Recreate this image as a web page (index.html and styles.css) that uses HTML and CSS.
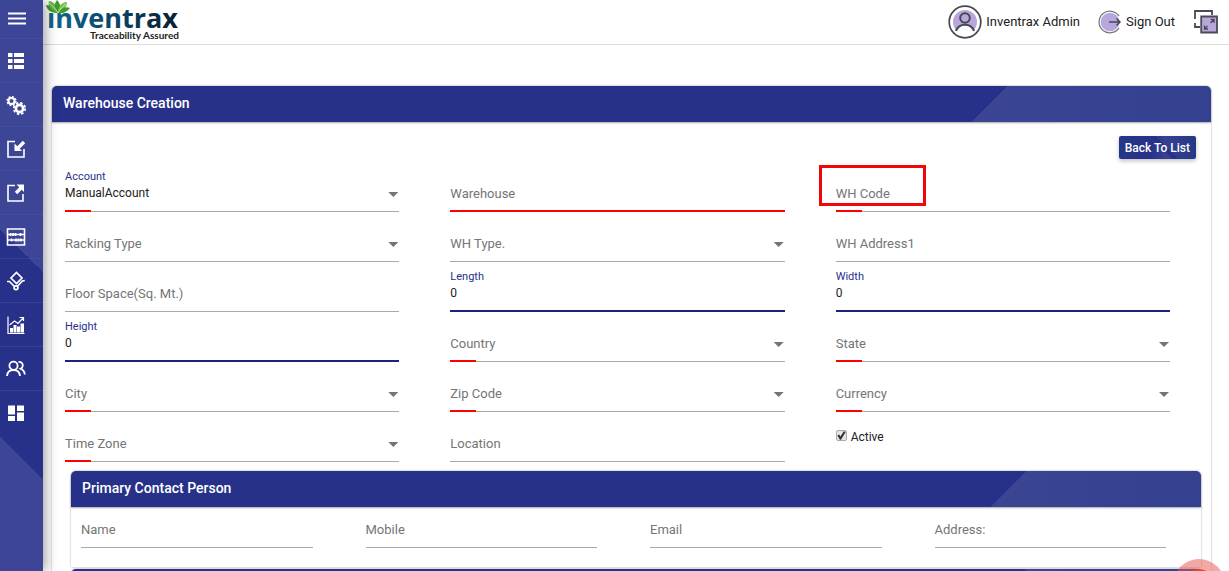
FILE: index.html
```html
<!DOCTYPE html>
<html lang="en">
<head>
<meta charset="utf-8">
<meta name="viewport" content="width=device-width, initial-scale=1">
<title>Warehouse Creation</title>
<link rel="stylesheet" href="styles.css">
</head>
<body>
<div class="app">
  <nav class="sidebar" aria-label="Main">
    <button class="nav-item nav-toggle" type="button" aria-label="Menu"><svg viewBox="0 0 20 20"><path d="M2 4.500h18M2 9.500h18M2 14.500h18" stroke="#fff" stroke-width="1.800"/></svg></button>
    <a class="nav-item" href="#" aria-label="List"><svg viewBox="0 0 20 20" fill="#fff"><path d="M2 2h4.500v4H2zM8 2h10v4H8zM2 8h4.500v4H2zM8 8h10v4H8zM2 14h4.500v4H2zM8 14h10v4H8z"/></svg></a>
    <a class="nav-item" href="#" aria-label="Settings"><svg viewBox="0 0 20 20" fill="none" stroke="#fff"><circle cx="5.500" cy="6" r="3" stroke-width="2"/><circle cx="5.500" cy="6" r="4.400" stroke-width="1.500" stroke-dasharray="1.900 1.556"/><circle cx="13.500" cy="13.500" r="3.600" stroke-width="2.600"/><circle cx="13.500" cy="13.500" r="5.700" stroke-width="1.700" stroke-dasharray="2.500 1.977"/></svg></a>
    <a class="nav-item" href="#" aria-label="Inbound"><svg viewBox="0 0 20 20" fill="none" stroke="#fff" stroke-width="1.600"><path d="M9 2.500H2v15.500h16v-8"/><path d="M18 3 12 9" stroke-width="3.400"/><path d="M8.500 4.500v7.500H16z" fill="#fff" stroke="none"/></svg></a>
    <a class="nav-item" href="#" aria-label="Outbound"><svg viewBox="0 0 20 20" fill="none" stroke="#fff" stroke-width="1.600"><path d="M9 2.500H2v15.500h15v-7"/><path d="M10 10 15.500 4.500" stroke-width="3.400"/><path d="M10.500 1.500H18V9z" fill="#fff" stroke="none"/></svg></a>
    <a class="nav-item" href="#" aria-label="Inventory"><svg viewBox="0 0 20 20" fill="none" stroke="#fff" stroke-width="1.600"><path d="M1.500 2h17v16h-17zM1.500 7.500h17M1.500 13h17"/><path d="M4.500 6v3M7 6v3M9.500 6v3M14.500 6v3M5.500 11.500v3M10 11.500v3M12.500 11.500v3M15 11.500v3" stroke-width="1.700"/></svg></a>
    <a class="nav-item" href="#" aria-label="Handling"><svg viewBox="0 0 20 20" fill="none" stroke="#fff" stroke-width="1.700"><path d="M10.500 1.500 16 7l-5.500 5.500L5 7z"/><path d="M1 10.500h2.500l5 5M18.800 9.500l-2.500.5-5 5.500"/><circle cx="10" cy="16.800" r="1.900"/></svg></a>
    <a class="nav-item" href="#" aria-label="Reports"><svg viewBox="0 0 20 20" fill="none" stroke="#fff"><path d="M2 1.500v17h16.500" stroke-width="1.200"/><path d="M4 13h3v4.500H4zM7.500 10h3v7.500h-3zM11 11.500h3v6h-3zM14.500 8.500H18v9h-3.500z" fill="#fff" stroke="none"/><path d="m3.500 10 5-4 3.500 2.500 5-5.500M13.500 2.500H17.500V6" stroke-width="1.200"/></svg></a>
    <a class="nav-item" href="#" aria-label="Users"><svg viewBox="0 0 20 20" fill="none" stroke="#fff" stroke-width="1.800"><circle cx="7.500" cy="6.800" r="4.100"/><path d="M1 17c.3-3.800 2.800-6 6.500-6s6.200 2.200 6.500 6M12.500 3c2.500-.3 4.300 1.200 4.300 3.400 0 1.600-.9 2.600-2.300 3.300 2.500 1 4 3 4.300 5.800"/></svg></a>
    <a class="nav-item" href="#" aria-label="Dashboard"><svg viewBox="0 0 20 20" fill="#fff"><path d="M2 2.500h7v9H2zM11 2.500h7v5.500h-7zM2 13h7v5H2zM11 9.500h7V18h-7z"/></svg></a>
  </nav>

  <div class="page">
    <header class="topbar">
      <a class="logo" href="#" aria-label="Inventrax Traceability Assured">
        <svg width="138" height="44" viewBox="0 0 138 44">
          <defs><linearGradient id="brand" x1="0" x2="1"><stop offset="0" stop-color="#12668e"/><stop offset=".5" stop-color="#0b4768"/><stop offset="1" stop-color="#06202f"/></linearGradient></defs>
          <text class="logo-name" x="2" y="28" fill="url(#brand)">inventrax</text>
          <path d="M1 5h10v8H1z" fill="#fff"/>
          <g fill="#3f9b2f"><path d="M13 13C7 13 2 11 1 5c6 0 10 3 12 8z"/><path d="M13 13C7 10 2 6 4 1c6 1 9 6 9 12z" fill="#64b445"/><path d="M13 13C9 8 9 4 12 0c4 4 4 8 1 13z"/><path d="M13 13c0-6 3-11 9-11 0 6-4 9-9 11z" fill="#78c043"/><path d="M13 13c3-5 7-7 12-5-3 4-7 6-12 5z"/></g>
          <path d="M13 13C10 8 7 5 4 3M13 13c2-4 5-7 8-9" fill="none" stroke="#d9efcb" stroke-width=".8"/>
          <text class="logo-tag" x="45" y="39">Traceability Assured</text>
        </svg>
      </a>
      <div class="account">
        <a class="account-link" href="#"><svg width="34" height="34" viewBox="0 0 34 34" fill="none" stroke="#444853" stroke-width="2"><circle cx="17" cy="17" r="15.800" stroke-width="1.700"/><circle cx="17" cy="17" r="12" fill="#b9a7dc" stroke="none"/><path d="M8 26c1.500-4.500 5-6.300 9-6.300s7.500 1.800 9 6.300l-4 4H12z" fill="#fff" stroke="none"/><circle cx="17" cy="13" r="4.800"/><path d="M8 26c1.500-4.500 5-6.300 9-6.300s7.500 1.800 9 6.300"/></svg>Inventrax Admin</a>
        <a class="account-link sign-out" href="#"><svg width="24" height="24" viewBox="0 0 24 24" fill="none" stroke="#777b86" stroke-width="1.300"><circle cx="12" cy="12" r="9.300" fill="#b9a7dc" stroke="none"/><path d="M21 6.200A10.800 10.800 0 1 0 21 17.800"/><path d="M11 12h11M18.500 8.500 22 12l-3.500 3.500" stroke="#444853" stroke-width="1.500"/></svg>Sign Out</a>
        <button class="icon-button" type="button" aria-label="Full screen"><svg width="24" height="24" viewBox="0 0 24 24" fill="none" stroke="#484b56" stroke-width="1.800"><path d="M1 9V1h17v4M1 13v4h5"/><path d="M7.200 6.500H23v16H7.200z" fill="#b9a7dc"/><path d="m16.500 13 3.500-3.500M16.800 9.500H20v3.200M13.500 16 10.500 19M10.500 15.500V19H14" stroke-width="1.300"/></svg></button>
      </div>
    </header>

    <main class="content">
      <section class="panel">
        <h1 class="panel-title">Warehouse Creation</h1>
        <div class="panel-body">
          <div class="actions"><button class="back" type="button">Back To List</button></div>
          <form class="fields">
            <div class="field select filled required"><label for="account">Account</label><select id="account"><option>ManualAccount</option></select></div>
            <div class="field invalid"><label for="warehouse">Warehouse</label><input id="warehouse" type="text"></div>
            <div class="field required marked"><label for="code">WH Code</label><input id="code" type="text"></div>
            <div class="field select"><label for="racking">Racking Type</label><select id="racking"><option></option></select></div>
            <div class="field select"><label for="type">WH Type.</label><select id="type"><option></option></select></div>
            <div class="field"><label for="address1">WH Address1</label><input id="address1" type="text"></div>
            <div class="field"><label for="floor">Floor Space(Sq. Mt.)</label><input id="floor" type="text"></div>
            <div class="field filled active"><label for="length">Length</label><input id="length" type="text" value="0"></div>
            <div class="field filled active"><label for="width">Width</label><input id="width" type="text" value="0"></div>
            <div class="field filled active"><label for="height">Height</label><input id="height" type="text" value="0"></div>
            <div class="field select required"><label for="country">Country</label><select id="country"><option></option></select></div>
            <div class="field select required"><label for="state">State</label><select id="state"><option></option></select></div>
            <div class="field select required"><label for="city">City</label><select id="city"><option></option></select></div>
            <div class="field select required"><label for="zip">Zip Code</label><select id="zip"><option></option></select></div>
            <div class="field select required"><label for="currency">Currency</label><select id="currency"><option></option></select></div>
            <div class="field select required"><label for="zone">Time Zone</label><select id="zone"><option></option></select></div>
            <div class="field"><label for="location">Location</label><input id="location" type="text"></div>
            <div class="check"><input id="active" type="checkbox" checked><label for="active">Active</label></div>
          </form>

          <section class="panel subpanel">
            <h2 class="panel-title">Primary Contact Person</h2>
            <div class="panel-body contact">
              <div class="field"><label for="name">Name</label><input id="name" type="text"></div>
              <div class="field"><label for="mobile">Mobile</label><input id="mobile" type="text"></div>
              <div class="field"><label for="email">Email</label><input id="email" type="email"></div>
              <div class="field"><label for="address">Address:</label><input id="address" type="text"></div>
            </div>
          </section>
          <section class="panel subpanel"><div class="panel-title"></div></section>
        </div>
      </section>
    </main>
  </div>
  <button class="fab" type="button" aria-label="Add"></button>
</div>
</body>
</html>
```
FILE: styles.css
```css
*, *::before, *::after { box-sizing: border-box; }

body {
  margin: 0;
  font-family: Roboto, "Liberation Sans", sans-serif;
  font-size: 13px;
  line-height: 20px;
  color: #212121;
  background: #fff;
}

button, input, select { font: inherit; color: inherit; }
a { color: inherit; text-decoration: none; }

.app {
  display: flex;
  height: 100vh;
  overflow: hidden;
}

.sidebar {
  z-index: 2;
  flex: 0 0 43px;
  box-shadow: 2px 0 12px rgba(0, 0, 0, .4);
  background:
    linear-gradient(45deg, #3d4696 50%, transparent 50%) 0 436px / 86px 86px no-repeat,
    linear-gradient(#3d4696, #3d4696) 0 479px / 100% 100% no-repeat,
    linear-gradient(45deg, #27318a 50%, transparent 50%) 0 229px / 86px 86px no-repeat,
    linear-gradient(#3d4696 272px, #27318a 272px);
}

.nav-item {
  display: flex;
  align-items: center;
  width: 100%;
  height: 44px;
  padding: 0 6px;
  border: 0;
  border-bottom: 1px solid rgba(90, 100, 180, .3);
  background: none;
}
.nav-item:last-child { border-bottom: 0; }
.nav-item svg { width: 20px; height: 20px; }
.nav-toggle { height: 39px; }

.page { flex: 1; min-width: 0; }

.topbar {
  display: flex;
  justify-content: space-between;
  align-items: center;
  height: 45px;
  padding: 0 11px 0 2px;
  border-bottom: 1px solid #ddd;
}
.logo svg { display: block; }
.logo-name { font: bold 27px "Open Sans", sans-serif; }
.logo-tag { font: bold 10px Lato, sans-serif; fill: #222; }

.account { display: flex; align-items: center; }
.account-link { display: flex; align-items: center; gap: 4px; }
.sign-out { margin: 0 19px 0 18px; }
.icon-button { display: flex; padding: 0; border: 0; background: none; }

.content { padding: 41px 18px 0 9px; }

.panel {
  border-radius: 5px 5px 0 0;
  box-shadow: 0 0 2px rgba(0, 0, 0, .4);
}
.panel-title {
  --accent: 240px;
  height: 36px;
  margin: 0;
  padding: 0 11px;
  border-radius: 5px 5px 0 0;
  font-size: 14px;
  font-weight: 500;
  line-height: 35px;
  color: #fff;
  background:
    linear-gradient(135deg, #27318a 26px, transparent 26px) 100% 0 / var(--accent) 36px no-repeat,
    linear-gradient(90deg, #3b4594, #33418f) 100% 0 / var(--accent) 36px no-repeat,
    #27318a;
  box-shadow: 0 1px 2px rgba(0, 0, 0, .35);
}

.actions { display: flex; justify-content: flex-end; padding: 14px 15px 3px; }
.back {
  height: 23px;
  padding: 0 6px;
  border: 0;
  border-radius: 2px;
  font-size: 12px;
  font-weight: 500;
  line-height: 22px;
  color: #fff;
  background:
    linear-gradient(45deg, transparent 44%, #27318a 44%, #27318a 56%, transparent 56%) 32px 0 / 26px 23px no-repeat,
    linear-gradient(90deg, #253787, #27318a 40%, #37418f 60%, #253787);
  box-shadow: 0 2px 4px rgba(0, 0, 0, .25);
}

.fields {
  display: grid;
  grid-template-columns: repeat(3, 1fr);
  column-gap: 51px;
  padding: 0 41px 9px 13px;
}

.field {
  --line: #aaa;
  --line-height: 1px;
  --mark: transparent;
  position: relative;
  display: grid;
  grid-template-rows: 15px 28px;
  padding-top: 7px;
}
.field label {
  grid-area: 2 / 1;
  z-index: 1;
  line-height: 19px;
  color: #757575;
  pointer-events: none;
}
.field input, .field select {
  grid-area: 2 / 1;
  appearance: none;
  width: 100%;
  min-width: 0;
  height: 28px;
  padding: 0 0 10px;
  border: 0;
  border-radius: 0;
  outline: 0;
  font-size: 12px;
  line-height: 18px;
  background:
    linear-gradient(var(--mark), var(--mark)) 0 100% / 26px 2px no-repeat,
    linear-gradient(var(--line), var(--line)) 0 100% / 100% var(--line-height) no-repeat;
}
.field.filled label { grid-row: 1; font-size: 11px; line-height: 16px; color: #27318a; }
.required { --mark: #f00 !important; }
.field.required { --mark: #f00; }
.field.invalid { --line: #f00; --line-height: 2px; }
.field.active { --line: #1a237e; --line-height: 2px; }
.select::after {
  content: "";
  grid-area: 2 / 1;
  justify-self: end;
  width: 10px;
  height: 5px;
  margin: 8px 1px 0 0;
  background: #757575;
  clip-path: polygon(0 0, 100% 0, 50% 100%);
  pointer-events: none;
}
.marked::before {
  content: "";
  position: absolute;
  top: 3px;
  left: -17px;
  width: 107px;
  height: 41px;
  border: 3px solid #f00808;
  pointer-events: none;
}

.check {
  display: flex;
  align-items: flex-start;
  gap: 4px;
  padding-top: 15px;
  font-size: 12px;
}
.check input {
  appearance: none;
  width: 11px;
  height: 11px;
  margin: 3px 0 0;
  border: 1px solid #aaa;
  border-radius: 2px;
  background: #e6e6e6;
}
.check input:checked::before {
  content: "";
  display: block;
  height: 9px;
  background: #333;
  clip-path: polygon(8% 50%, 28% 40%, 42% 62%, 80% 2%, 100% 12%, 48% 96%, 36% 96%);
}

.subpanel { margin: 0 10px 2px 19px; }
.subpanel .panel-title { --accent: 211px; }
.contact {
  display: grid;
  grid-template-columns: repeat(4, 1fr);
  column-gap: 53px;
  padding: 0 35px 19px 10px;
}
.contact .field { grid-template-rows: 6px 28px; }

.fab {
  position: fixed;
  right: 4px;
  bottom: -40px;
  width: 52px;
  height: 52px;
  border: 10px solid rgba(229, 90, 84, .52);
  border-radius: 50%;
  background: #e8432e padding-box;
}
```
